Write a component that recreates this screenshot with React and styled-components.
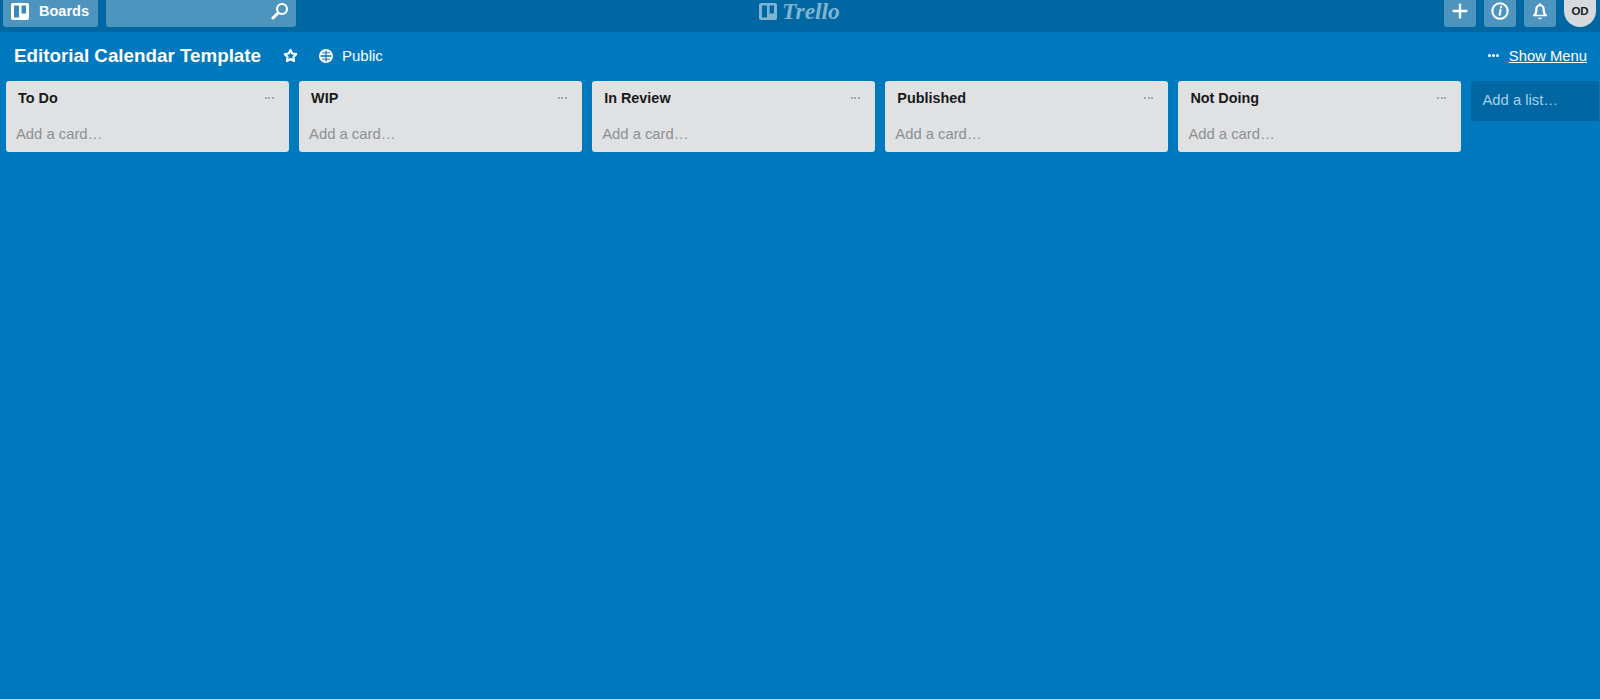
import styled, { createGlobalStyle } from 'styled-components'
import { Plus } from 'lucide-react'

const GlobalStyle = createGlobalStyle`
  html, body {
    margin: 0;
    padding: 0;
    height: 100%;
  }
  body {
    background: #0079bf;
    font-family: "Liberation Sans", Arial, sans-serif;
    overflow: hidden;
  }
`

const Page = styled.div`
  height: 699px;
  background: #0079bf;
  overflow: hidden;
`

const Header = styled.header`
  height: 32px;
  box-sizing: border-box;
  background: #0067a3;
  display: flex;
  align-items: flex-start;
  justify-content: space-between;
  padding: 0 4px 0 3px;
  position: relative;
`

const HeaderGroup = styled.div`
  display: flex;
  align-items: flex-start;
  gap: 8px;
`

const HeaderButton = styled.div`
  height: 27px;
  width: 32px;
  box-sizing: border-box;
  background: #4d95bf;
  border-radius: 0 0 3px 3px;
  color: #fff;
  display: flex;
  align-items: center;
  justify-content: center;
  padding-bottom: 5px;
  flex: none;
`

const BoardsButton = styled(HeaderButton)`
  width: 95px;
  justify-content: flex-start;
  gap: 10px;
  padding-left: 8px;
  font-size: 14.5px;
  font-weight: bold;
`

const SearchBox = styled(HeaderButton)`
  width: 190px;
  justify-content: flex-end;
  padding-right: 7px;
`

const Logo = styled.div`
  position: absolute;
  left: 759px;
  top: 2px;
  display: flex;
  align-items: center;
  gap: 5px;
  color: #7fb3d2;
`

const LogoText = styled.span`
  font-family: "Liberation Serif", serif;
  font-style: italic;
  font-weight: bold;
  font-size: 23.5px;
  line-height: 18px;
`

const Avatar = styled.div`
  width: 32px;
  height: 27px;
  flex: none;
  border-radius: 0 0 16px 16px;
  background: #d6dadc;
  color: #1c1c1c;
  font-size: 11.5px;
  font-weight: bold;
  display: flex;
  align-items: center;
  justify-content: center;
  padding-bottom: 5px;
  box-sizing: border-box;
`

const BoardBar = styled.div`
  height: 48px;
  box-sizing: border-box;
  display: flex;
  align-items: center;
  color: #fff;
  padding: 0 13px 1px 14px;
`

const BoardTitle = styled.h1`
  margin: 0;
  font-size: 18.8px;
  font-weight: bold;
  line-height: 24px;
`

const StarIcon = styled.svg`
  margin-left: 22px;
`

const Visibility = styled.div`
  display: flex;
  align-items: center;
  gap: 9px;
  margin-left: 21px;
  font-size: 15px;
`

const ShowMenu = styled.div`
  margin-left: auto;
  display: flex;
  align-items: center;
  gap: 10px;
  font-size: 14.8px;
`

const MenuLink = styled.span`
  text-decoration: underline;
`

const Dots = styled.span`
  display: inline-flex;
  gap: ${(props) => (props.$dot > 2 ? 1 : 1.5)}px;
  i {
    width: ${(props) => props.$dot}px;
    height: ${(props) => props.$dot}px;
    border-radius: 50%;
    background: ${(props) => props.$color};
  }
`

const Lists = styled.div`
  display: flex;
  align-items: flex-start;
  gap: 10.35px;
  padding: 1px 0 0 6px;
`

const List = styled.section`
  width: 282.75px;
  height: 71px;
  flex: none;
  box-sizing: border-box;
  background: #dfe1e3;
  border-radius: 3px;
  padding: 0 10px;
  display: flex;
  flex-direction: column;
`

const ListHeader = styled.div`
  display: flex;
  align-items: center;
  justify-content: space-between;
  height: 34px;
  padding: 0 5px 0 2px;
`

const ListTitle = styled.h2`
  margin: 0;
  font-size: 14.4px;
  font-weight: bold;
  color: #1a1a1a;
`

const AddCard = styled.div`
  margin-top: 9px;
  font-size: 14.8px;
  line-height: 20px;
  color: #8c9094;
`

const AddList = styled.div`
  width: 128px;
  height: 40px;
  flex: none;
  box-sizing: border-box;
  background: #0067a3;
  border-radius: 3px 0 0 3px;
  color: #a9cfe6;
  font-size: 14.8px;
  padding: 11px 0 0 11px;
`

const listNames = ['To Do', 'WIP', 'In Review', 'Published', 'Not Doing']

const DotRow = ({ color, dot = 2 }) => (
  <Dots $color={color} $dot={dot}>
    <i />
    <i />
    <i />
  </Dots>
)

const BoardGlyph = ({ color, hole }) => (
  <svg width="18" height="17" viewBox="0 0 18 17">
    <rect width="18" height="17" rx="2" fill={color} />
    <rect x="3" y="2.5" width="5" height="12" fill={hole} />
    <rect x="10.5" y="2.5" width="4.5" height="8" fill={hole} />
  </svg>
)

const SearchGlyph = () => (
  <svg width="18" height="18" viewBox="0 0 18 18" fill="none" stroke="#fff">
    <circle cx="11" cy="7" r="5" strokeWidth="2.2" />
    <path d="M7 11 L2 16" strokeWidth="3" strokeLinecap="round" />
  </svg>
)

const InfoGlyph = () => (
  <svg width="18" height="18" viewBox="0 0 18 18">
    <circle cx="9" cy="9" r="7.7" fill="none" stroke="#fff" strokeWidth="2" />
    <path d="M9.6 7.6 L8.6 13" stroke="#fff" strokeWidth="2" strokeLinecap="round" />
    <circle cx="10.1" cy="4.9" r="1.2" fill="#fff" />
  </svg>
)

const BellGlyph = () => (
  <svg width="18" height="18" viewBox="0 0 18 18">
    <path
      d="M9 1.2c.8 0 1.3.5 1.4 1.2 2.2.6 3.3 2.3 3.3 4.6 0 3.2.8 4.8 2.3 6.2v1H2v-1c1.500-1.400 2.300-3 2.300-6.200 0-2.300 1.100-4 3.300-4.600C7.700 1.700 8.200 1.200 9 1.200zM6.800 15.800h4.400c-.3.900-1.200 1.500-2.200 1.500s-1.900-.6-2.200-1.500z"
      fill="#fff"
    />
    <path d="M6.500 7c0-1.500.8-2.700 2.500-2.700s2.500 1.200 2.500 2.700c0 2.500.4 4.200 1.200 5.700H5.300c.8-1.500 1.200-3.200 1.200-5.700z" fill="#4d95bf" />
  </svg>
)

const StarGlyph = () => (
  <StarIcon width="15" height="15" viewBox="0 0 24 24" fill="none" stroke="#fff" strokeWidth="3.4" strokeLinejoin="round">
    <path d="M12 3l2.800 5.900 6.400.9-4.600 4.500 1.100 6.400-5.700-3-5.700 3 1.100-6.400-4.600-4.500 6.400-.9z" />
  </StarIcon>
)

const PublicGlyph = () => (
  <svg width="14" height="14" viewBox="0 0 14 14">
    <circle cx="7" cy="7" r="7" fill="#fff" />
    <path d="M7 1.500v11M1.500 7h11" stroke="#0079bf" strokeWidth="1.300" />
    <path d="M3 3.800h8M3 10.200h8" stroke="#0079bf" strokeWidth="0.900" />
  </svg>
)

const App = () => {
  return (
    <Page>
      <GlobalStyle />
      <Header>
        <HeaderGroup>
          <BoardsButton>
            <BoardGlyph color="#fff" hole="#3a8ab9" />
            Boards
          </BoardsButton>
          <SearchBox>
            <SearchGlyph />
          </SearchBox>
        </HeaderGroup>
        <Logo>
          <BoardGlyph color="#7fb3d2" hole="#0067a3" />
          <LogoText>Trello</LogoText>
        </Logo>
        <HeaderGroup>
          <HeaderButton>
            <Plus size={22} strokeWidth={2.6} />
          </HeaderButton>
          <HeaderButton>
            <InfoGlyph />
          </HeaderButton>
          <HeaderButton>
            <BellGlyph />
          </HeaderButton>
          <Avatar>OD</Avatar>
        </HeaderGroup>
      </Header>
      <BoardBar>
        <BoardTitle>Editorial Calendar Template</BoardTitle>
        <StarGlyph />
        <Visibility>
          <PublicGlyph />
          Public
        </Visibility>
        <ShowMenu>
          <DotRow color="#fff" dot={3} />
          <MenuLink>Show Menu</MenuLink>
        </ShowMenu>
      </BoardBar>
      <Lists>
        {listNames.map((name) => (
          <List key={name}>
            <ListHeader>
              <ListTitle>{name}</ListTitle>
              <DotRow color="#8c9094" />
            </ListHeader>
            <AddCard>Add a card…</AddCard>
          </List>
        ))}
        <AddList>Add a list…</AddList>
      </Lists>
    </Page>
  )
}

export default App
